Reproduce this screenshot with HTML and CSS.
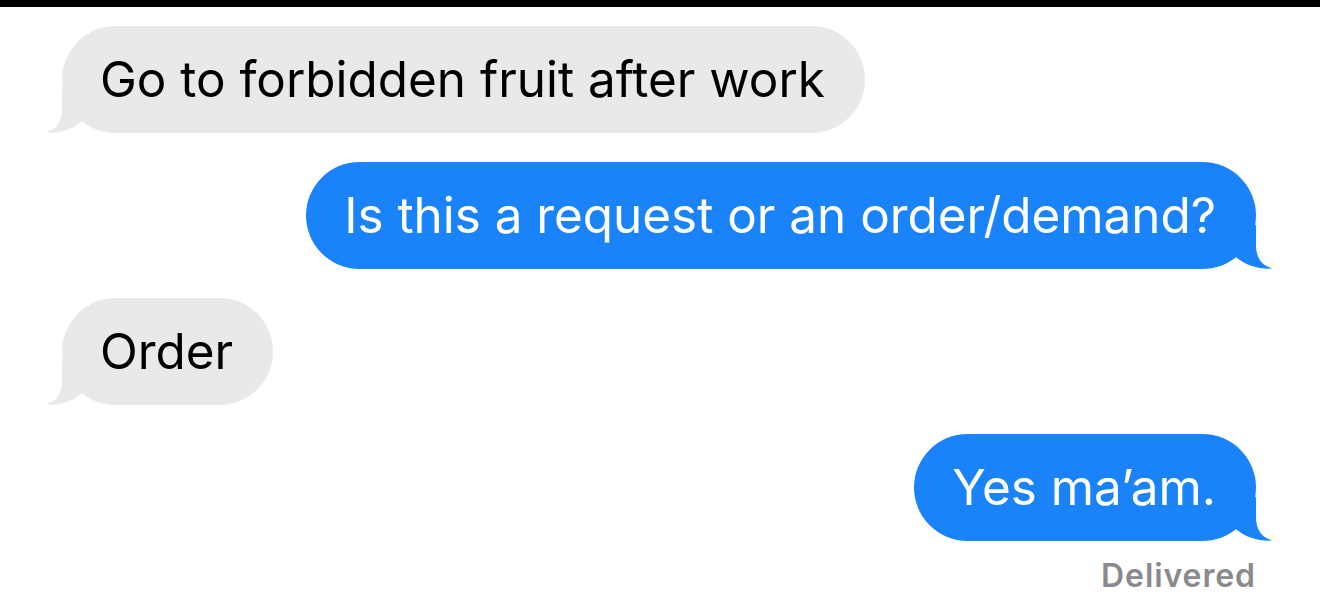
FILE: index.html
```html
<!DOCTYPE html>
<html lang="en">
<head>
	<meta charset="UTF-8">
	<title>Messages</title>
	<link rel="stylesheet" href="styles.css">
</head>
<body>

	<div class="topbar"></div>

	<main class="thread">
		<div class="msg in">
			<p class="bubble">Go to forbidden fruit after work</p>
			<svg class="tail" viewBox="0 0 40 44"><path d="M17 0 L17 20 C17 33 11 41 0 43.5 C13 44.5 27 41 37 32 L40 34 L40 0 Z"/></svg>
		</div>
		<div class="msg out">
			<p class="bubble">Is this a request or an order/demand?</p>
			<svg class="tail" viewBox="0 0 40 44"><path d="M17 0 L17 20 C17 33 11 41 0 43.5 C13 44.5 27 41 37 32 L40 34 L40 0 Z"/></svg>
		</div>
		<div class="msg in">
			<p class="bubble">Order</p>
			<svg class="tail" viewBox="0 0 40 44"><path d="M17 0 L17 20 C17 33 11 41 0 43.5 C13 44.5 27 41 37 32 L40 34 L40 0 Z"/></svg>
		</div>
		<div class="last">
			<div class="msg out">
				<p class="bubble">Yes ma’am.</p>
				<svg class="tail" viewBox="0 0 40 44"><path d="M17 0 L17 20 C17 33 11 41 0 43.5 C13 44.5 27 41 37 32 L40 34 L40 0 Z"/></svg>
			</div>
			<div class="receipt">Delivered</div>
		</div>
	</main>

</body>
</html>
```

FILE: styles.css
```css
* {
	margin:0;
	padding:0;
}
html,body {
	height:100%;
	overflow:hidden;
	background:#fff;
}
body {
	font-family:Inter, "Liberation Sans", sans-serif;
}
.topbar {
	height:7px;
	background:#000;
}
.thread {
	display:flex;
	flex-direction:column;
	gap:29px;
	padding:19px 64px 0 62px;
}
.msg {
	position:relative;
}
.msg.in {
	align-self:flex-start;
	color:#e9e9eb;
}
.msg.out {
	align-self:flex-end;
	color:#1a83fa;
}
.bubble {
	position:relative;
	z-index:1;
	padding:24px 40px 24px 38px;
	border-radius:54px;
	font-size:49.4px;
	line-height:59px;
	white-space:nowrap;
}
.msg.in .bubble {
	background:#e9e9eb;
	color:#000;
}
.msg.out .bubble {
	background:#1a83fa;
	color:#fff;
}
/* bubble tail, sits under the bubble corner */
.tail {
	position:absolute;
	bottom:0;
	width:40px;
	height:44px;
	fill:currentColor;
}
.msg.in .tail {
	left:-17px;
}
.msg.out .tail {
	right:-17px;
	transform:scaleX(-1);
}
.last {
	display:flex;
	flex-direction:column;
	align-items:flex-end;
}
.receipt {
	margin-top:16px;
	font-size:32px;
	line-height:38px;
	font-weight:600;
	letter-spacing:0.9px;
	color:#8a8a8e;
}
```
